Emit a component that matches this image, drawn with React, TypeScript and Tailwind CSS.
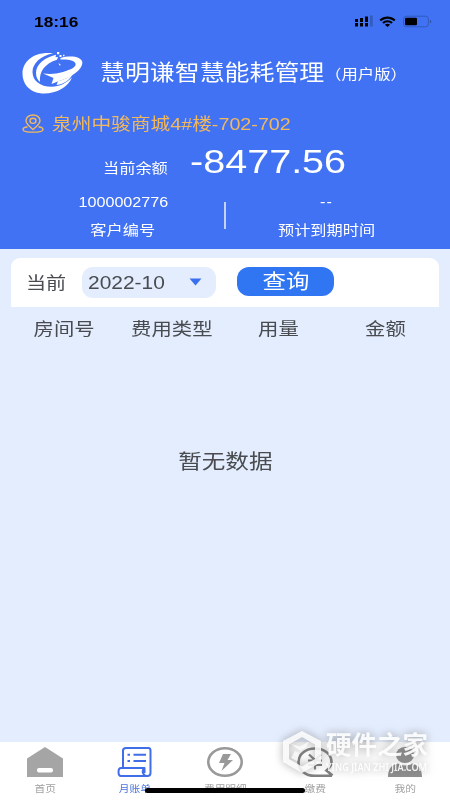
import type { ReactNode } from 'react';
import { clsx } from 'clsx';

interface WideProps {
  children: ReactNode;
  className?: string;
}

// Slightly extended lettering used across the whole app
function Wide({ children, className }: WideProps) {
  return (
    <span className={clsx('block whitespace-nowrap leading-none scale-x-[1.17]', className)}>
      {children}
    </span>
  );
}

function StatusBar() {
  return (
    <div className="flex h-11 items-center justify-between pl-[34px] pr-[18px]">
      <Wide className="origin-left text-[14.800px] font-semibold text-black">18:16</Wide>
      <svg width="78" height="14" viewBox="0 0 78 14">
        <path
          d="M1 3.5h3v3H1zM6 2.5h3v4H6zM11 1h3v5.5h-3zM1 7.5h3V11H1zM6 7.5h3V11H6zM11 7.5h3V11h-3z"
          transform="translate(0 0.5)"
        />
        <path d="M16 .5h2.8v11H16z" fill="#355cbd" />
        <path d="M25.5 4.7c4.5-4.2 11.500-4.200 16 0l-1.500 1.500c-3.800-3.400-9.200-3.400-13 0z" />
        <path d="M28.200 7.200c3-2.700 7.600-2.700 10.600 0l-1.600 1.500c-2.200-1.800-5.200-1.800-7.400 0z" />
        <path d="M30.900 9.700c1.500-1.300 3.700-1.300 5.200 0l-2.600 2.300z" />
        <rect x="49.600" y="1.200" width="24.800" height="10.600" rx="2.800" fill="none" stroke="#315abf" strokeWidth="1" />
        <rect x="51" y="2.700" width="12" height="7.600" rx="1.200" />
        <path d="M76 4.700c1.600.4 1.600 3.200 0 3.600z" fill="#2d4fa5" />
      </svg>
    </div>
  );
}

function Logo() {
  return (
    <svg width="62" height="44" viewBox="0 0 62 44" fill="#fff">
      <path d="M31 2.300C14 0 .5 9 .5 22.500.5 34 9 42.500 22 42.500c13 0 24-6.500 28-16C44 32 38 35.800 29.500 35.800 18 35.800 10.500 29.500 10.500 21 10.500 12.500 18 5.500 31 2.300z" />
      <path d="M34 3.800C23 6.500 14 13 14 22c0 4 1.500 7 4 9C17 20.500 23 12.500 35 8.800l1-2.800-2.500.3z" />
      <path d="M38.500 7C49 4 59.500 5.800 60.300 11 61 18 50 26.500 37 30L29.500 33l2-6-10.500-4.500c7 1 13.500.5 20-1.500C49 18.500 54.500 16 53.500 12.500 52.500 9 45 8 38.500 8.500z" />
      <path d="M36 30.200c6-1.500 10-3.600 14.500-6.700-2.500 5-8 9.500-16 10.500z" />
      <path d="M35 1h2.300v2.300H35zM37.500 4h2v2h-2zM41 3.800h1.500v1.500H41zM36.500 12l2.500 2-1.500.5z" />
    </svg>
  );
}

function PinIcon() {
  return (
    <svg width="22" height="20" viewBox="0 0 22 20" fill="none" stroke="#f1b95c" strokeWidth="1.400">
      <path d="M11 15.500C6.500 11.800 4 9.500 4 6.700 4 3.400 7 1 11 1s7 2.400 7 5.700c0 2.800-2.500 5.100-7 8.800z" />
      <ellipse cx="11" cy="6.800" rx="3" ry="2.600" />
      <path d="M5.500 12.800C2.800 13.300 1 14.200 1 15.400c0 1.700 4.500 2.700 10 2.700s10-1 10-2.700c0-1.200-1.800-2.100-4.500-2.600" />
    </svg>
  );
}

function Header() {
  return (
    <header className="h-[249px] bg-[#4272f4] text-white">
      <StatusBar />
      <div className="flex h-[58px] items-center pl-[22px]">
        <Logo />
        <Wide className="ml-4 mt-0.5 w-[225px] origin-left text-[21.300px]">慧明谦智慧能耗管理</Wide>
        <Wide className="mt-0.5 origin-left text-[14px]">（用户版）</Wide>
      </div>
      <div className="flex h-11 items-center pl-[22px] text-[#f1b95c]">
        <PinIcon />
        <Wide className="ml-2 mt-0.5 origin-left text-[16.850px]">泉州中骏商城4#楼-702-702</Wide>
      </div>
      <div className="flex h-[42px] pl-[103px]">
        <Wide className="mt-4 w-[87px] origin-left text-[13.850px]">当前余额</Wide>
        <Wide className="mt-[-1px] origin-left text-[33.800px]">-8477.56</Wide>
      </div>
      <div className="flex items-center">
        <div className="ml-[22px] flex w-[202px] flex-col items-center gap-[14px] pt-2">
          <Wide className="text-[13.800px]">1000002776</Wide>
          <Wide className="text-[13.850px]">客户编号</Wide>
        </div>
        <div className="mt-1.5 h-[27px] w-[1.500px] bg-[#c3d3ec]" />
        <div className="flex w-[203px] flex-col items-center gap-[14px] pt-2">
          <Wide className="text-[13.800px] tracking-[1px]">--</Wide>
          <Wide className="text-[13.850px]">预计到期时间</Wide>
        </div>
      </div>
    </header>
  );
}

function FilterBar() {
  return (
    <div className="mx-[11px] mt-[9px] flex h-[49px] items-start rounded-t-[9px] bg-white pl-[15px] pt-[9px]">
      <Wide className="mt-2 w-[56px] origin-left text-[17.200px]">当前</Wide>
      <button className="flex h-[31px] w-[134px] items-center justify-between rounded-[11px] bg-[#e4edfd] pl-[6px] pr-[14px]">
        <Wide className="mt-0.5 origin-left text-[17.900px]">2022-10</Wide>
        <svg width="13" height="8" viewBox="0 0 13 8" className="mb-0.5">
          <path d="M.5.500h12L6.500 7.500z" fill="#3a70f0" />
        </svg>
      </button>
      <button className="ml-[21px] flex h-[29px] w-[97px] items-center justify-center rounded-[12px] bg-[#3076f3] text-white">
        <Wide className="text-[20px]">查询</Wide>
      </button>
    </div>
  );
}

function BillTable() {
  return (
    <div className="flex-1">
      <div className="mx-[11px] grid grid-cols-4 justify-items-center pt-[14px] text-[17.400px]">
        <Wide>房间号</Wide>
        <Wide>费用类型</Wide>
        <Wide>用量</Wide>
        <Wide>金额</Wide>
      </div>
      <div className="flex justify-center pt-[114px]">
        <Wide className="text-[20.200px]">暂无数据</Wide>
      </div>
    </div>
  );
}

const tabs = [
  {
    label: '首页',
    icon: (
      <>
        <path d="M20 1L38 12.500V31H2V12.500z" fill="#a5a5a5" />
        <rect x="12" y="22" width="16" height="4.500" rx="2" fill="#fff" />
      </>
    ),
  },
  {
    label: '月账单',
    active: true,
    icon: (
      <g fill="none" stroke="#3f6ee8" strokeWidth="2" strokeLinejoin="round">
        <path d="M8 22V4.500Q8 2 11 2h22.500Q35.500 2 35.500 4.500V27q0 3-3 3H6q-2.500 0-2.500-4T6 22h23.500q-2.500 2-1.500 5t4 3M29.500 22v5" />
        <path d="M18.500 8.800H31M18.500 15H31M12.500 8.800h2.500M12.500 15h2.500" />
      </g>
    ),
  },
  {
    label: '费用明细',
    icon: (
      <>
        <ellipse cx="20" cy="16" rx="16.700" ry="13.800" fill="none" stroke="#999" strokeWidth="2.600" />
        <path d="M18 8h8l-3.500 6H28L16.500 25l3-8H14z" fill="#999" />
      </>
    ),
  },
  {
    label: '缴费',
    icon: (
      <g fill="none" stroke="#808080" strokeWidth="2.600">
        <path d="M37 29.800H20C10 29.800 3.500 24 3.500 16S11 2.500 20 2.500 36.500 8 36.500 16c0 3.500-2.500 6.500-5 8.500l6 5" />
        <path d="M14 8.500l6 5.500 6-5.500M13 14.500h14M13 19h14M20 13.500v10" strokeWidth="2.200" />
      </g>
    ),
  },
  {
    label: '我的',
    icon: (
      <g fill="#8f8f8f">
        <ellipse cx="20" cy="9" rx="9" ry="8" />
        <path d="M3 31c0-8 3.500-12.500 10-13.500 4 2.500 10 2.500 14 0C33.500 18.500 37 23 37 31z" />
      </g>
    ),
  },
];

function Watermark() {
  return (
    <div className="absolute left-[282px] top-[-13px] flex gap-1 text-white drop-shadow-[0_0_4px_rgba(80,80,80,0.55)]">
      <svg width="40" height="44" viewBox="0 0 40 44" fill="#fff" className="mt-px">
        <path
          d="M20 1L39 11v21L20 43 1 32V11zM20 7L7 14.500V29l13 7.500L33 29V14.500z"
          fillRule="evenodd"
          fillOpacity="0.85"
        />
        <path d="M9 14l9 2.500 9-5-3 6-6 3zM9 28l4-7 4 2-1.500 8z" fillOpacity="0.7" />
      </svg>
      <div className="opacity-90">
        <div className="whitespace-nowrap text-[25.500px] font-bold leading-[32px]">硬件之家</div>
        <div className="mt-px origin-left scale-x-[0.9] whitespace-nowrap font-['Noto_Sans',sans-serif] text-[10.200px] font-semibold leading-[10px]">
          YING JIAN ZHI JIA.COM
        </div>
      </div>
    </div>
  );
}

function TabBar() {
  return (
    <nav className="relative grid h-[58px] grid-cols-5 bg-white">
      {tabs.map((tab) => (
        <div
          key={tab.label}
          className={clsx('flex flex-col items-center pt-1', tab.active ? 'text-[#4c76dc]' : 'text-[#a0a0a0]')}
        >
          <svg width="40" height="32" viewBox="0 0 40 32">
            {tab.icon}
          </svg>
          <Wide className="mt-[7px] text-[9.200px]">{tab.label}</Wide>
        </div>
      ))}
      {/* Home indicator */}
      <div className="absolute left-[145px] top-[46px] h-[5px] w-[160px] rounded-full bg-black" />
      <Watermark />
    </nav>
  );
}

export default function App() {
  return (
    <div className="flex h-[800px] w-[450px] flex-col overflow-hidden bg-[#e4edfd] font-['Liberation_Sans','Noto_Sans_CJK_SC',sans-serif] text-[#484b50]">
      <Header />
      <FilterBar />
      <BillTable />
      <TabBar />
    </div>
  );
}
